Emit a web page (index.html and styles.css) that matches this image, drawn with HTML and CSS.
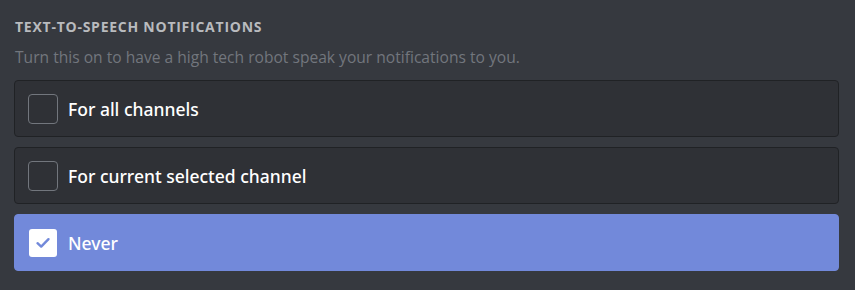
FILE: index.html
```html
<!DOCTYPE html>
<html>
<head>
<meta charset="utf-8">
<link rel="stylesheet" href="styles.css">
</head>
<body>
<div class="section">
  <h5 class="title">Text-to-Speech Notifications</h5>
  <p class="desc">Turn this on to have a high tech robot speak your notifications to you.</p>
  <div class="options">
    <div class="option">
      <span class="box"></span>
      <span class="label">For all channels</span>
    </div>
    <div class="option">
      <span class="box"></span>
      <span class="label">For current selected channel</span>
    </div>
    <div class="option selected">
      <span class="box">
        <svg width="18" height="18" viewBox="0 0 18 18"><path d="M3.5 9.2 L7.2 12.6 L14.5 5.2" fill="none" stroke="#7289da" stroke-width="2.4" stroke-linecap="round" stroke-linejoin="round"/></svg>
      </span>
      <span class="label">Never</span>
    </div>
  </div>
</div>
</body>
</html>
```
FILE: styles.css
```css
html, body {
  margin: 0;
  padding: 0;
  background: #36393f;
  height: 100%;
}
.section {
  padding: 18px 16px 0 14px;
  font-family: "Open Sans", "Noto Sans", sans-serif;
}
.title {
  margin: 0 0 0 1px;
  font-size: 14px;
  line-height: 17px;
  font-weight: 700;
  text-transform: uppercase;
  letter-spacing: 0.75px;
  color: #b9bbbe;
}
.desc {
  margin: 11px 0 0 1px;
  font-size: 15.6px;
  line-height: 22px;
  color: #72767d;
}
.options {
  margin-top: 12px;
  display: flex;
  flex-direction: column;
  gap: 10px;
}
.option {
  height: 57px;
  box-sizing: border-box;
  display: flex;
  align-items: center;
  gap: 10px;
  padding-left: 13px;
  background: #2f3136;
  border: 1px solid #202225;
  border-radius: 4px;
}
.box {
  width: 30px;
  height: 30px;
  box-sizing: border-box;
  border: 1px solid #72767d;
  border-radius: 4px;
  display: flex;
  align-items: center;
  justify-content: center;
}
.label {
  font-family: "Noto Sans", "Open Sans", sans-serif;
  font-size: 17.5px;
  font-weight: 500;
  color: #ffffff;
}
.option.selected {
  background: #7289da;
  border-color: #7289da;
}
.option.selected .box {
  border-color: transparent;
  background: #ffffff;
  background-clip: padding-box;
}
```
